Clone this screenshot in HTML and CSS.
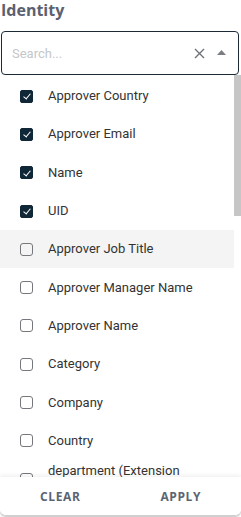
FILE: index.html
```
<!DOCTYPE html>
<html>
  <head>
    <title>Identity filter</title>
    <link rel="stylesheet" href="styles.css">
  </head>
  <body>
    <section class="filtro">
      <h2 class="title">Identity</h2>
      <div class="search">
        <input type="text" placeholder="Search...">
        <span class="clear-x">
          <svg width="11" height="11" viewBox="0 0 11 11"><path d="M1 1 L10 10 M10 1 L1 10" stroke="#6f7378" stroke-width="1.4" fill="none"/></svg>
        </span>
        <span class="caret">
          <svg width="9" height="5" viewBox="0 0 9 5"><path d="M0 5 L4.5 0 L9 5 Z" fill="#7a7d82"/></svg>
        </span>
      </div>
      <div class="panel">
        <ul class="options">
          <li class="checked"><span class="box"></span>Approver Country</li>
          <li class="checked"><span class="box"></span>Approver Email</li>
          <li class="checked"><span class="box"></span>Name</li>
          <li class="checked"><span class="box"></span>UID</li>
          <li class="hover"><span class="box"></span>Approver Job Title</li>
          <li><span class="box"></span>Approver Manager Name</li>
          <li><span class="box"></span>Approver Name</li>
          <li><span class="box"></span>Category</li>
          <li><span class="box"></span>Company</li>
          <li><span class="box"></span>Country</li>
          <li><span class="box"></span><span class="lbl">department (Extension Attribute)</span></li>
          <li><span class="box"></span>Department</li>
          <li><span class="box"></span>Display Name</li>
          <li><span class="box"></span>Email</li>
          <li><span class="box"></span>Employee ID</li>
          <li><span class="box"></span>Employee Type</li>
          <li><span class="box"></span>First Name</li>
          <li><span class="box"></span>Job Title</li>
          <li><span class="box"></span>Last Name</li>
        </ul>
        <div class="scrollbar"></div>
        <div class="footer">
          <button>CLEAR</button>
          <button>APPLY</button>
        </div>
      </div>
    </section>
  </body>
</html>
```
FILE: styles.css
```
body {
  margin: 0;
  font-family: Roboto, "Liberation Sans", sans-serif;
  background: #fff;
  overflow: hidden;
}

.filtro {
  width: 241px;
  height: 517px;
  display: flex;
  flex-direction: column;
}

.title {
  margin: 0;
  padding: 0 0 0 1px;
  height: 32px;
  line-height: 22px;
  margin-top: -1px;
  font-family: "Open Sans", sans-serif;
  font-size: 16px;
  font-weight: 700;
  color: #5b6170;
}

.search {
  display: flex;
  align-items: center;
  height: 42px;
  margin: 0 2px 0 1px;
  border: 1px solid #1b2a36;
  border-radius: 4px;
  padding: 0 12px 0 10px;
}

.search input {
  flex: 1;
  min-width: 0;
  border: none;
  outline: none;
  font-family: Roboto, sans-serif;
  font-size: 13px;
  color: #333;
  padding: 0;
}

.search input::placeholder {
  color: #c4c7cb;
}

.clear-x {
  display: flex;
  margin-right: 12px;
}

.caret {
  display: flex;
  margin-bottom: 2px;
}

.panel {
  flex: 1;
  display: flex;
  flex-direction: column;
  min-height: 0;
  position: relative;
  border-bottom: 1px solid #d0d0d0;
  border-radius: 0 0 6px 6px;
  box-shadow: 0 1px 2px rgba(0, 0, 0, 0.25);
  margin-bottom: 1px;
}

.options {
  list-style: none;
  margin: 0 7px 0 0;
  padding: 2px 0 0 0;
  flex: 1;
  overflow: hidden;
}

.scrollbar {
  position: absolute;
  right: 0;
  top: 0;
  width: 7px;
  height: 141px;
  background: #c6c6c6;
}

.options li {
  display: flex;
  align-items: center;
  min-height: 38.3px;
  padding: 0 12px 0 20px;
  font-size: 13px;
  line-height: 16px;
  color: #333;
}

.options li.hover {
  background: #f4f4f4;
}

.box {
  width: 11px;
  height: 11px;
  border: 1px solid #74777c;
  border-radius: 3px;
  margin-right: 15px;
  flex-shrink: 0;
  position: relative;
}

.checked .box {
  background: #0f2737;
  border-color: #0f2737;
  border-radius: 2px;
}

.checked .box::after {
  content: "";
  position: absolute;
  left: 3.5px;
  top: 1.5px;
  width: 3px;
  height: 6px;
  border: solid #fff;
  border-width: 0 1.5px 1.5px 0;
  transform: rotate(40deg);
}

.footer {
  display: flex;
  height: 38px;
  background: #fff;
  box-shadow: 0 -2px 4px rgba(0, 0, 0, 0.06);
  position: relative;
  border-radius: 0 0 6px 6px;
}

.footer button {
  flex: 1;
  border: none;
  background: none;
  font-family: "Open Sans", sans-serif;
  font-size: 12px;
  font-weight: 700;
  letter-spacing: 0.6px;
  color: #5b6472;
  padding: 0;
}
```
